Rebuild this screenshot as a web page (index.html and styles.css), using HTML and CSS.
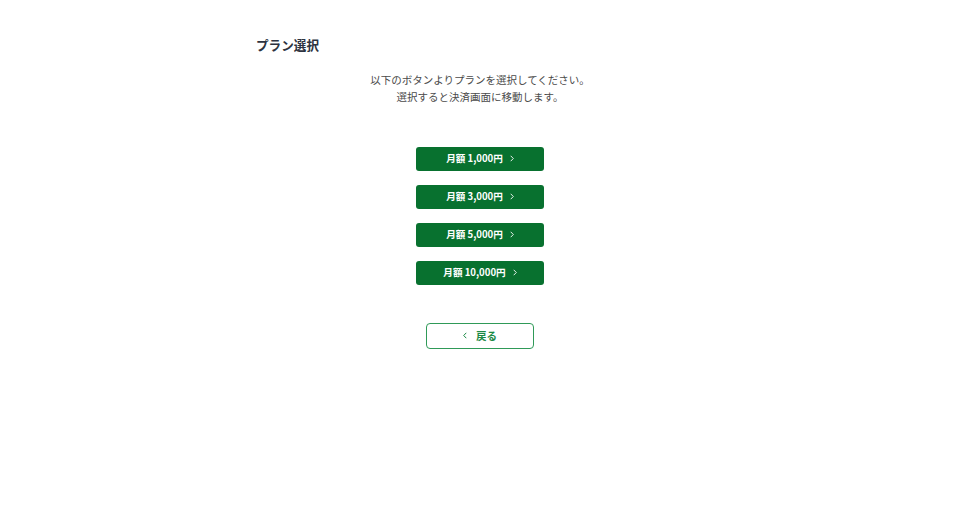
FILE: index.html
```html
<!DOCTYPE html>
<html lang="ja">
<head>
  <meta charset="UTF-8">
  <title>プラン選択</title>
  <link rel="stylesheet" href="styles.css">
</head>
<body>
  <div class="page">
    <h1 class="title">プラン選択</h1>
    <p class="lead">以下のボタンよりプランを選択してください。<br>選択すると決済画面に移動します。</p>

    <div class="plans">
      <a class="plan-btn" href="#">月額 1,000円<svg class="chev" viewBox="0 0 4 7"><path d="M0.7 0.8 L3.3 3.5 L0.7 6.2"/></svg></a>
      <a class="plan-btn" href="#">月額 3,000円<svg class="chev" viewBox="0 0 4 7"><path d="M0.7 0.8 L3.3 3.5 L0.7 6.2"/></svg></a>
      <a class="plan-btn" href="#">月額 5,000円<svg class="chev" viewBox="0 0 4 7"><path d="M0.7 0.8 L3.3 3.5 L0.7 6.2"/></svg></a>
      <a class="plan-btn" href="#">月額 10,000円<svg class="chev" viewBox="0 0 4 7"><path d="M0.7 0.8 L3.3 3.5 L0.7 6.2"/></svg></a>
    </div>

    <div class="back">
      <a class="back-btn" href="#"><svg class="chev-left" viewBox="0 0 4 7"><path d="M3.3 0.8 L0.7 3.5 L3.3 6.2"/></svg>戻る</a>
    </div>
  </div>
</body>
</html>
```

FILE: styles.css
```css
body {
  margin: 0;
  background: #fff;
  font-family: "Noto Sans", "Noto Sans CJK JP", sans-serif;
  color: #333;
}
.page {
  width: 448px;
  margin: 0 auto;
  padding-top: 36px;
}
.title {
  margin: 0;
  font-size: 12.6px;
  line-height: 20px;
  font-weight: bold;
  color: #2d3340;
}
.lead {
  margin: 16px 0 0;
  text-align: center;
  font-size: 10.5px;
  line-height: 17px;
  color: #4a4a4a;
}
.plans {
  margin-top: 41px;
  display: flex;
  flex-direction: column;
  align-items: center;
  gap: 14px;
}
.plan-btn {
  display: flex;
  justify-content: center;
  align-items: center;
  box-sizing: border-box;
  width: 128px;
  height: 24px;
  padding-bottom: 2px;
  background: #08712f;
  border-radius: 3px;
  color: #fff;
  font-family: "Noto Sans CJK JP", sans-serif;
  font-size: 9.6px;
  font-weight: bold;
  text-decoration: none;
}
.chev {
  width: 4px;
  height: 7px;
  margin-left: 7px;
  fill: none;
  stroke: #fff;
  stroke-width: 0.9;
}
.back {
  margin-top: 38px;
  display: flex;
  justify-content: center;
}
.back-btn {
  display: flex;
  justify-content: center;
  align-items: center;
  box-sizing: border-box;
  width: 108px;
  height: 26px;
  padding-bottom: 1px;
  border: 1px solid #2f9a58;
  border-radius: 4px;
  color: #1c8a45;
  font-family: "Noto Sans CJK JP", sans-serif;
  font-size: 10.5px;
  font-weight: bold;
  text-decoration: none;
}
.chev-left {
  width: 4px;
  height: 7px;
  margin-right: 9px;
  fill: none;
  stroke: #1c8a45;
  stroke-width: 1;
}
```
